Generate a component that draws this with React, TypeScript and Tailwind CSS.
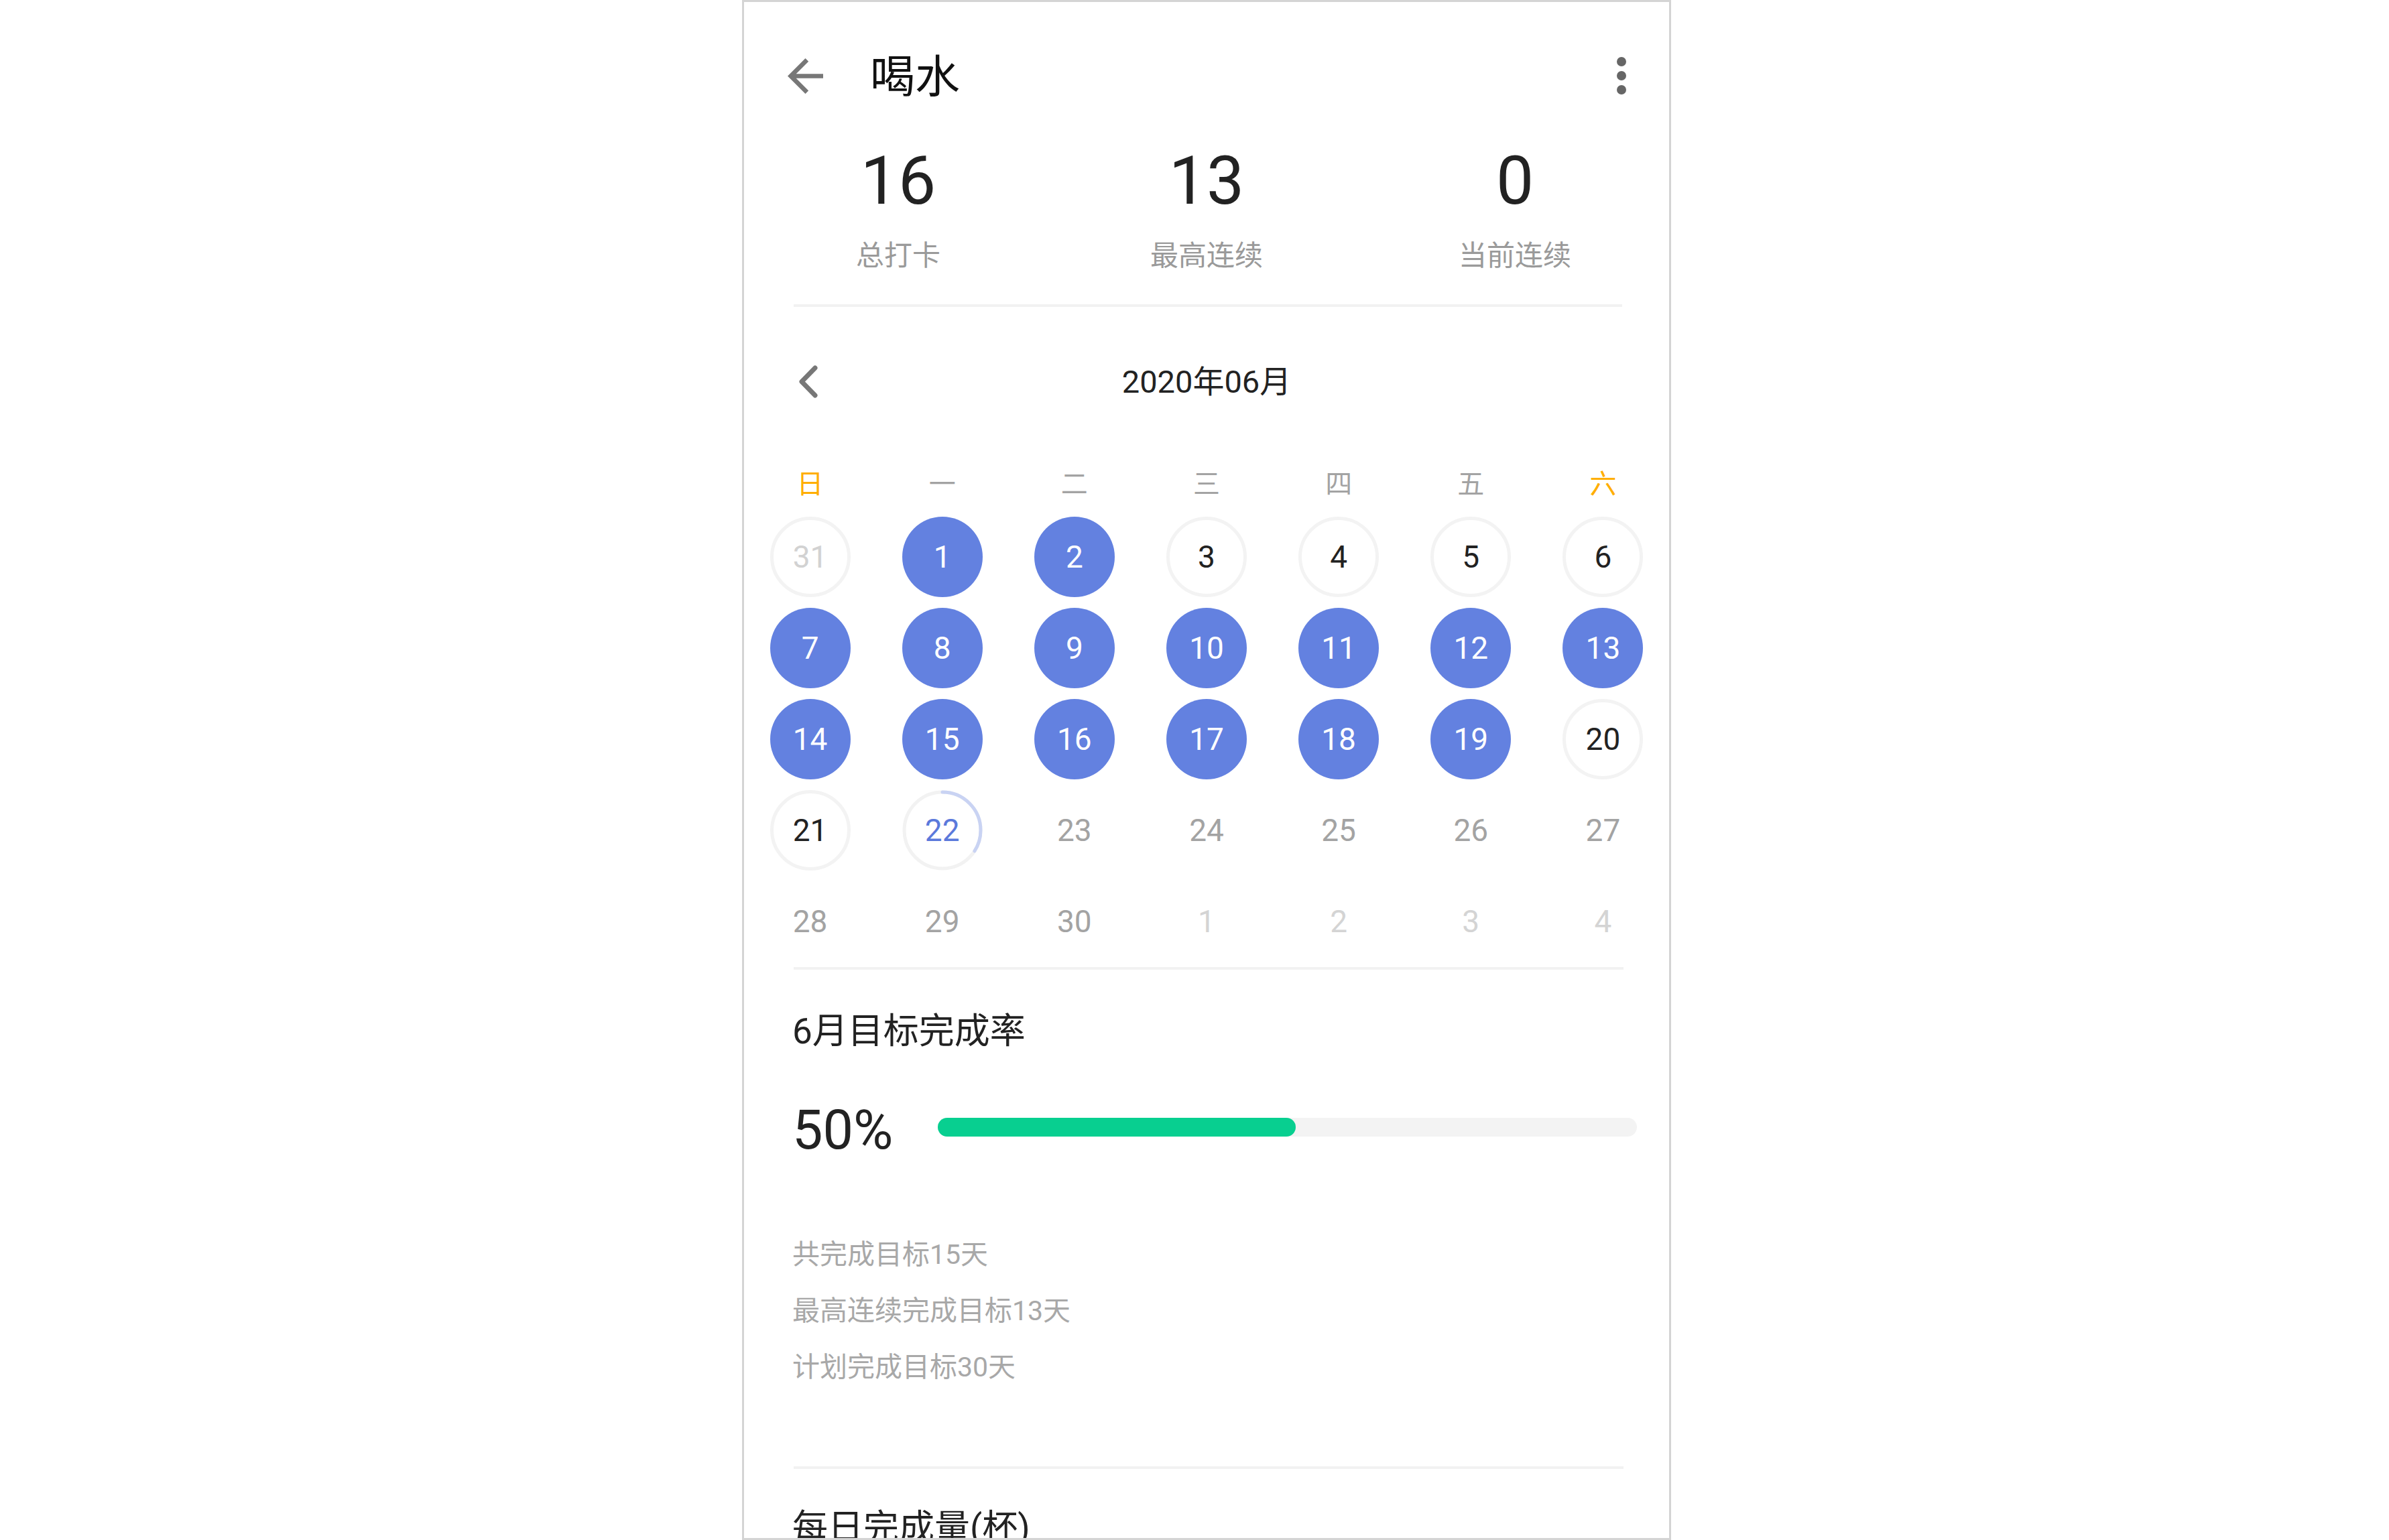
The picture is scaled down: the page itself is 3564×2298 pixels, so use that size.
import React from 'react';

type Day = {
    n: number;
    kind: 'done' | 'ring' | 'today' | 'future' | 'other' | 'prev';
};

const weeks: Day[][] = [
    [
        { n: 31, kind: 'prev' },
        { n: 1, kind: 'done' },
        { n: 2, kind: 'done' },
        { n: 3, kind: 'ring' },
        { n: 4, kind: 'ring' },
        { n: 5, kind: 'ring' },
        { n: 6, kind: 'ring' },
    ],
    [7, 8, 9, 10, 11, 12, 13].map((n) => ({ n, kind: 'done' as const })),
    [
        ...[14, 15, 16, 17, 18, 19].map((n) => ({ n, kind: 'done' as const })),
        { n: 20, kind: 'ring' },
    ],
    [
        { n: 21, kind: 'ring' },
        { n: 22, kind: 'today' },
        ...[23, 24, 25, 26, 27].map((n) => ({ n, kind: 'future' as const })),
    ],
    [
        ...[28, 29, 30].map((n) => ({ n, kind: 'future' as const })),
        ...[1, 2, 3, 4].map((n) => ({ n, kind: 'other' as const })),
    ],
];

const weekdays = ['日', '一', '二', '三', '四', '五', '六'];

const DayCell = ({ day }: { day: Day }) => {
    if (day.kind === 'done') {
        return (
            <div className="w-[120px] h-[120px] rounded-full bg-[#6381e0] flex items-center justify-center text-white">
                {day.n}
            </div>
        );
    }
    if (day.kind === 'today') {
        return (
            <div className="relative w-[120px] h-[120px] flex items-center justify-center text-[#5b79db]">
                <svg className="absolute inset-0 -rotate-90" width="120" height="120" viewBox="0 0 120 120">
                    <circle cx="60" cy="60" r="57" fill="none" stroke="#f2f2f2" strokeWidth="5" />
                    <circle
                        cx="60"
                        cy="60"
                        r="57"
                        fill="none"
                        stroke="#c9d3f3"
                        strokeWidth="5"
                        strokeLinecap="round"
                        strokeDasharray="122 400"
                    />
                </svg>
                <span className="relative">{day.n}</span>
            </div>
        );
    }
    if (day.kind === 'ring' || day.kind === 'prev') {
        return (
            <div
                className={`w-[120px] h-[120px] rounded-full border-[5px] border-[#f3f3f3] flex items-center justify-center ${
                    day.kind === 'prev' ? 'text-[#d2d2d2]' : 'text-[#222]'
                }`}
            >
                {day.n}
            </div>
        );
    }
    return (
        <div
            className={`w-[120px] h-[120px] flex items-center justify-center ${
                day.kind === 'future' ? 'text-[#a3a3a3]' : 'text-[#d4d4d4]'
            }`}
        >
            {day.n}
        </div>
    );
};

const App = () => {
    return (
        <div className="w-[3564px] h-[2298px] bg-white font-['Roboto','Noto_Sans_CJK_SC',sans-serif]">
            <div className="ml-[1107px] w-[1386px] h-[2298px] border-[3px] border-[#d4d4d4] overflow-hidden">
                {/* Header */}
                <div className="mt-[42px] h-[140px] flex items-center pl-[65px] pr-[64px]">
                    <svg className="-mt-[4px]" width="53" height="53" viewBox="4 4 16 16" fill="#777">
                        <path d="M20 11H7.83l5.59-5.59L12 4l-8 8 8 8 1.41-1.41L7.83 13H20v-2z" />
                    </svg>
                    <h1 className="ml-[70px] text-[67px] leading-none text-[#111]">喝水</h1>
                    <div className="ml-auto -mt-[4px] flex flex-col items-center gap-[7px]">
                        <span className="w-[14px] h-[14px] rounded-full bg-[#666]" />
                        <span className="w-[14px] h-[14px] rounded-full bg-[#666]" />
                        <span className="w-[14px] h-[14px] rounded-full bg-[#666]" />
                    </div>
                </div>

                {/* Stats */}
                <div className="pt-[35px] grid grid-cols-3">
                    {[
                        { v: '16', l: '总打卡' },
                        { v: '13', l: '最高连续' },
                        { v: '0', l: '当前连续' },
                    ].map((s) => (
                        <div key={s.l} className="flex flex-col items-center">
                            <span className="text-[100px] leading-[100px] text-[#222]">{s.v}</span>
                            <span className="mt-[41px] text-[42px] leading-[42px] text-[#9a9a9a]">{s.l}</span>
                        </div>
                    ))}
                </div>
                <div className="mt-[51px] ml-[74px] mr-[70px] h-[4px] bg-[#f2f2f2]" />

                {/* Calendar */}
                <div className="mt-[61px] h-[100px] relative flex items-center justify-center">
                    <svg className="absolute left-[80px]" width="31" height="49" viewBox="0 0 31 49" fill="none">
                        <polyline
                            points="26,4 6,24.5 26,45"
                            stroke="#777"
                            strokeWidth="7"
                            strokeLinecap="round"
                            strokeLinejoin="round"
                        />
                    </svg>
                    <span className="text-[47px] leading-none text-[#222]">2020年06月</span>
                </div>

                <div className="mt-[74px] grid grid-cols-7 h-[60px] items-center text-[40px] leading-none">
                    {weekdays.map((w, i) => (
                        <span
                            key={w}
                            className={`text-center ${i === 0 || i === 6 ? 'text-[#ffae00]' : 'text-[#a3a3a3]'}`}
                        >
                            {w}
                        </span>
                    ))}
                </div>

                <div className="mt-[10px] text-[46px] leading-none">
                    {weeks.map((week, wi) => (
                        <div key={wi} className="grid grid-cols-7 h-[136px] items-center">
                            {week.map((d, di) => (
                                <div key={di} className="flex justify-center">
                                    <DayCell day={d} />
                                </div>
                            ))}
                        </div>
                    ))}
                </div>
                <div className="ml-[74px] mr-[68px] h-[4px] bg-[#f2f2f2]" />

                {/* Monthly goal */}
                <div className="pl-[72px]">
                    <h2 className="mt-[66px] text-[53px] leading-[53px] text-[#222]">6月目标完成率</h2>
                    <div className="mt-[79px] flex items-start">
                        <span className="w-[217px] text-[81px] leading-[84px] text-[#222]">50%</span>
                        <div className="mt-[23px] w-[1043px] h-[28px] rounded-full bg-[#f3f3f3]">
                            <div className="w-[534px] h-[28px] rounded-full bg-[#08cf90]" />
                        </div>
                    </div>
                    <div className="mt-[101px] text-[41px] leading-[84px] text-[#a8a8a8]">
                        <p>共完成目标15天</p>
                        <p>最高连续完成目标13天</p>
                        <p>计划完成目标30天</p>
                    </div>
                </div>
                <div className="mt-[106px] ml-[74px] mr-[68px] h-[4px] bg-[#f2f2f2]" />
                <h2 className="mt-[62px] pl-[72px] text-[53px] leading-[53px] text-[#222]">每日完成量(杯)</h2>
            </div>
        </div>
    );
};

export default App;
